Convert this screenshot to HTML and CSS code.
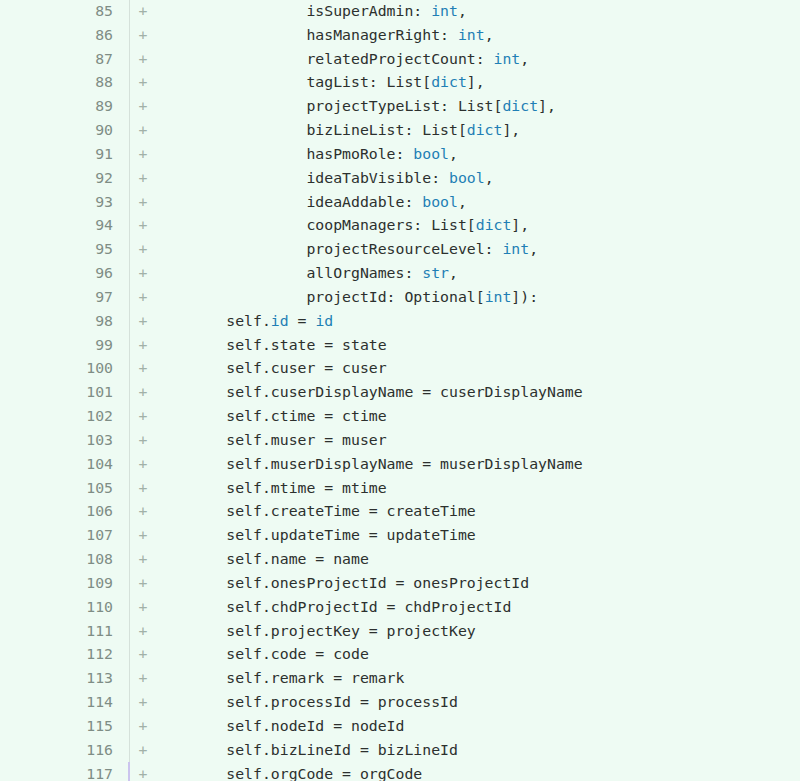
FILE: index.html
```html
<!DOCTYPE html>
<html>
<head>
<meta charset="utf-8">
<link rel="stylesheet" href="styles.css">
</head>
<body>
<div class="diff">
<div class="row"><span class="num">85</span><span class="bar"></span><span class="plus">+</span><span class="code">                 isSuperAdmin: <span class="kw">int</span>,</span></div>
<div class="row"><span class="num">86</span><span class="bar"></span><span class="plus">+</span><span class="code">                 hasManagerRight: <span class="kw">int</span>,</span></div>
<div class="row"><span class="num">87</span><span class="bar"></span><span class="plus">+</span><span class="code">                 relatedProjectCount: <span class="kw">int</span>,</span></div>
<div class="row"><span class="num">88</span><span class="bar"></span><span class="plus">+</span><span class="code">                 tagList: List[<span class="kw">dict</span>],</span></div>
<div class="row"><span class="num">89</span><span class="bar"></span><span class="plus">+</span><span class="code">                 projectTypeList: List[<span class="kw">dict</span>],</span></div>
<div class="row"><span class="num">90</span><span class="bar"></span><span class="plus">+</span><span class="code">                 bizLineList: List[<span class="kw">dict</span>],</span></div>
<div class="row"><span class="num">91</span><span class="bar"></span><span class="plus">+</span><span class="code">                 hasPmoRole: <span class="kw">bool</span>,</span></div>
<div class="row"><span class="num">92</span><span class="bar"></span><span class="plus">+</span><span class="code">                 ideaTabVisible: <span class="kw">bool</span>,</span></div>
<div class="row"><span class="num">93</span><span class="bar"></span><span class="plus">+</span><span class="code">                 ideaAddable: <span class="kw">bool</span>,</span></div>
<div class="row"><span class="num">94</span><span class="bar"></span><span class="plus">+</span><span class="code">                 coopManagers: List[<span class="kw">dict</span>],</span></div>
<div class="row"><span class="num">95</span><span class="bar"></span><span class="plus">+</span><span class="code">                 projectResourceLevel: <span class="kw">int</span>,</span></div>
<div class="row"><span class="num">96</span><span class="bar"></span><span class="plus">+</span><span class="code">                 allOrgNames: <span class="kw">str</span>,</span></div>
<div class="row"><span class="num">97</span><span class="bar"></span><span class="plus">+</span><span class="code">                 projectId: Optional[<span class="kw">int</span>]):</span></div>
<div class="row"><span class="num">98</span><span class="bar"></span><span class="plus">+</span><span class="code">        self.<span class="kw">id</span> = <span class="kw">id</span></span></div>
<div class="row"><span class="num">99</span><span class="bar"></span><span class="plus">+</span><span class="code">        self.state = state</span></div>
<div class="row"><span class="num">100</span><span class="bar"></span><span class="plus">+</span><span class="code">        self.cuser = cuser</span></div>
<div class="row"><span class="num">101</span><span class="bar"></span><span class="plus">+</span><span class="code">        self.cuserDisplayName = cuserDisplayName</span></div>
<div class="row"><span class="num">102</span><span class="bar"></span><span class="plus">+</span><span class="code">        self.ctime = ctime</span></div>
<div class="row"><span class="num">103</span><span class="bar"></span><span class="plus">+</span><span class="code">        self.muser = muser</span></div>
<div class="row"><span class="num">104</span><span class="bar"></span><span class="plus">+</span><span class="code">        self.muserDisplayName = muserDisplayName</span></div>
<div class="row"><span class="num">105</span><span class="bar"></span><span class="plus">+</span><span class="code">        self.mtime = mtime</span></div>
<div class="row"><span class="num">106</span><span class="bar"></span><span class="plus">+</span><span class="code">        self.createTime = createTime</span></div>
<div class="row"><span class="num">107</span><span class="bar"></span><span class="plus">+</span><span class="code">        self.updateTime = updateTime</span></div>
<div class="row"><span class="num">108</span><span class="bar"></span><span class="plus">+</span><span class="code">        self.name = name</span></div>
<div class="row"><span class="num">109</span><span class="bar"></span><span class="plus">+</span><span class="code">        self.onesProjectId = onesProjectId</span></div>
<div class="row"><span class="num">110</span><span class="bar"></span><span class="plus">+</span><span class="code">        self.chdProjectId = chdProjectId</span></div>
<div class="row"><span class="num">111</span><span class="bar"></span><span class="plus">+</span><span class="code">        self.projectKey = projectKey</span></div>
<div class="row"><span class="num">112</span><span class="bar"></span><span class="plus">+</span><span class="code">        self.code = code</span></div>
<div class="row"><span class="num">113</span><span class="bar"></span><span class="plus">+</span><span class="code">        self.remark = remark</span></div>
<div class="row"><span class="num">114</span><span class="bar"></span><span class="plus">+</span><span class="code">        self.processId = processId</span></div>
<div class="row"><span class="num">115</span><span class="bar"></span><span class="plus">+</span><span class="code">        self.nodeId = nodeId</span></div>
<div class="row"><span class="num">116</span><span class="bar"></span><span class="plus">+</span><span class="code">        self.bizLineId = bizLineId</span></div>
<div class="row"><span class="num">117</span><span class="bar bar-mark"></span><span class="plus">+</span><span class="code">        self.orgCode = orgCode</span></div>
</div>
</body>
</html>
```

FILE: styles.css
```css
html, body {
  margin: 0;
  padding: 0;
  background: #eefbf3;
  height: 100%;
  overflow: hidden;
}

.diff {
  margin-top: -1px;
  font-family: "DejaVu Sans Mono", "Liberation Mono", monospace;
  font-size: 14.8px;
  line-height: 23.84px;
  color: #2c302e;
}

.row {
  display: flex;
  height: 23.84px;
  white-space: pre;
}

.num {
  width: 113px;
  flex: none;
  text-align: right;
  color: #7f8d85;
}

.bar {
  width: 16px;
  flex: none;
  border-right: 1px solid #d5e1da;
}

.bar-mark {
  border-right: 2px solid #cbc4ee;
  width: 15px;
}

.plus {
  width: 25px;
  flex: none;
  box-sizing: border-box;
  padding-left: 8.5px;
  color: #a2b1a8;
}

.code {
  flex: 1;
}

.kw {
  color: #1f7fb5;
}
```
